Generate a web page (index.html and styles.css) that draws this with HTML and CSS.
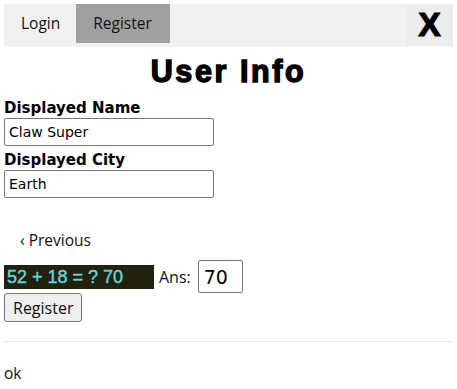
FILE: index.html
```html
<!DOCTYPE html>
<html>
<head>
<meta charset="utf-8">
<link rel="stylesheet" href="styles.css">
</head>
<body>
<nav class="nav">
  <a class="tab">Login</a>
  <a class="tab active">Register</a>
  <a class="close">X</a>
</nav>
<h1 class="title">User Info</h1>
<form class="form">
  <label class="label">Displayed Name</label>
  <input class="field" type="text" value="Claw Super">
  <label class="label">Displayed City</label>
  <input class="field" type="text" value="Earth">
  <div class="prev">&#8249; Previous</div>
  <div class="captcha-row">
    <span class="captcha">52 + 18 = ? 70</span>
    <span class="ans-label">Ans:</span>
    <input class="ans" type="text" value="70">
  </div>
  <button class="submit" type="button">Register</button>
</form>
<hr class="rule">
<p class="status">ok</p>
</body>
</html>
```

FILE: styles.css
```css
html, body { background: #fff; }
body {
  margin: 4px;
  font-family: "Open Sans", "Noto Sans", sans-serif;
  font-size: 15.5px;
  color: #111;
}
.nav {
  display: flex;
  align-items: flex-start;
  height: 43px;
  background: #f1f1f1;
}
.tab {
  height: 39px;
  line-height: 39px;
  padding: 0 16px 0 17px;
  color: #111;
}
.tab.active { background: #a0a0a0; padding: 0 18px 0 17px; }
.close {
  margin-left: auto;
  margin-top: 1px;
  width: 47px;
  height: 40px;
  background: #ececec;
  font-family: "Liberation Sans", Arial, sans-serif;
  font-weight: bold;
  font-size: 33px;
  line-height: 40px;
  text-align: center;
  color: #000;
  -webkit-text-stroke: 1.2px #000;
}
.title {
  margin: 6px 0 0;
  text-align: center;
  font-family: "Liberation Sans", Arial, sans-serif;
  font-size: 30.5px;
  font-weight: bold;
  line-height: 36px;
  letter-spacing: 2.6px;
  -webkit-text-stroke: 1.4px #000;
  color: #000;
}
.form { display: flex; flex-direction: column; align-items: flex-start; margin-top: 10px; }
.label {
  font-family: "DejaVu Sans", Verdana, sans-serif;
  font-weight: bold;
  font-size: 15px;
  line-height: 18px;
  color: #000;
}
.field {
  box-sizing: border-box;
  width: 210px;
  height: 28px;
  margin: 1px 0 5px;
  padding: 0 4px;
  border: 1px solid #767676;
  border-radius: 2px;
  font-family: "DejaVu Sans", Verdana, sans-serif;
  font-size: 14px;
  color: #000;
}
.prev {
  margin-top: 19px;
  height: 36px;
  line-height: 36px;
  padding: 0 16px;
}
.captcha-row { display: flex; align-items: center; height: 33px; margin-top: 2px; }
.captcha {
  box-sizing: border-box;
  width: 150px;
  height: 24px;
  line-height: 24px;
  padding-left: 3px;
  background: #22200f;
  color: #5fd8d8;
  font-family: "Liberation Sans", Arial, sans-serif;
  font-size: 18px;
  -webkit-text-stroke: 0.4px #5fd8d8;
}
.ans-label { margin-left: 5px; font-size: 16px; }
.ans {
  box-sizing: border-box;
  width: 45px;
  height: 33px;
  margin-left: 7px;
  padding: 0 5px;
  border: 1px solid #767676;
  border-radius: 2px;
  font-family: "DejaVu Sans", Verdana, sans-serif;
  font-size: 19px;
  color: #000;
}
.submit {
  box-sizing: border-box;
  height: 29px;
  padding: 0 8px;
  border: 1px solid #767676;
  border-radius: 3px;
  background: #efefef;
  font-family: "Open Sans", "Noto Sans", sans-serif;
  font-size: 16px;
  color: #111;
}
.rule { margin: 19px 0 0; border: 0; border-top: 1px solid #eaeaea; }
.status { margin: 21px 0 0; line-height: 20px; }
```
